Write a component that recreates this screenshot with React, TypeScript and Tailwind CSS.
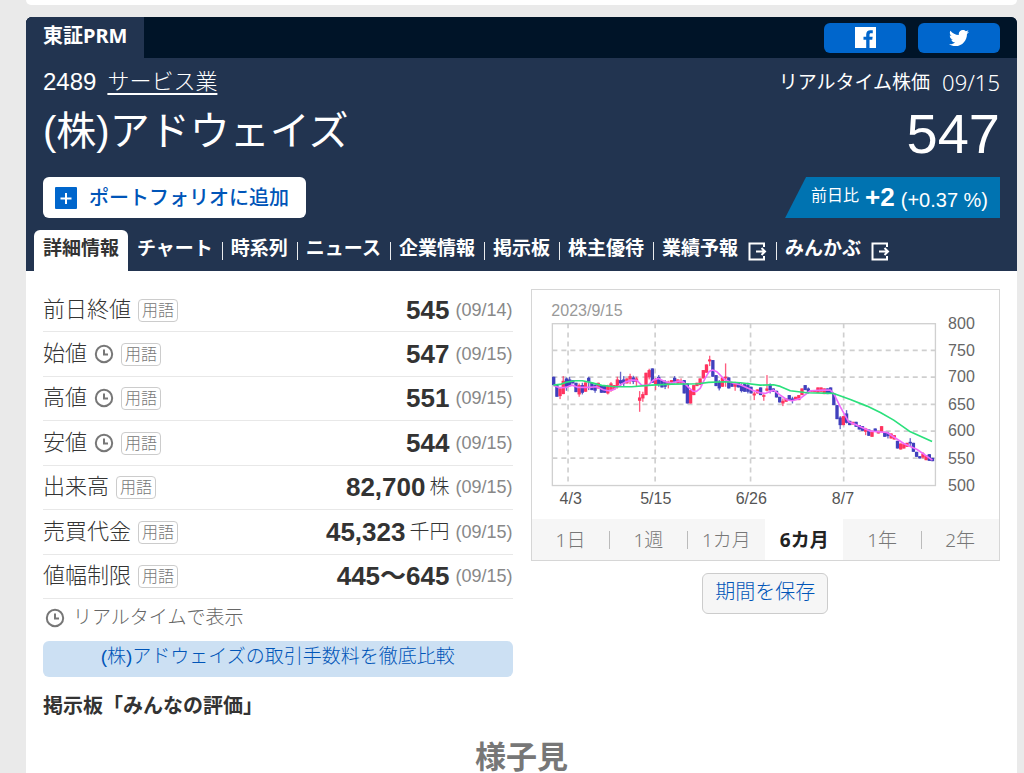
import { Fragment } from "react";
import { FaTwitter } from "react-icons/fa";

type Candle = [up: 0 | 1, top: number, bottom: number, high?: number, low?: number];

// body top / bottom, then wick ends, in chart units
const candles: Candle[] = [
  [0,290,315], [0,312,350], [1,325,348,320,357], [1,302,342,288,342], [0,295,320,292,332],
  [0,298,318,290,318], [0,300,310], [0,308,336], [1,315,343,310,350], [0,315,338,308,343],
  [1,307,335], [0,293,305,290,330], [0,308,330], [0,315,332,312,338], [1,308,325],
  [0,315,338], [0,318,338], [1,318,340,314,343], [1,310,332,306,335], [1,315,328],
  [1,298,318,290,325], [0,300,310,275,320], [0,298,310,288,320], [1,295,310], [1,288,298,281,312],
  [0,292,305,287,312], [1,295,305,290,318], [1,352,362,333,395], [1,342,355,335,365], [1,278,345],
  [1,270,292,266,298], [0,265,308], [1,298,312,294,330], [0,290,315,285,320], [0,300,322],
  [0,305,320,300,327], [1,305,315,302,325], [1,300,310], [0,293,305,288,310], [1,298,310],
  [1,303,310,295,312], [0,300,340], [0,310,370], [1,330,370], [1,315,345],
  [1,308,318], [1,295,315], [1,270,295], [1,253,278], [1,238,244,227,258],
  [0,240,290], [0,285,318], [0,305,325,300,331], [1,292,320], [1,290,295,250,320],
  [0,292,325], [0,308,320], [1,308,320,305,332], [0,308,322], [0,315,333,310,337],
  [0,312,335], [0,315,335,308,340], [0,320,340], [1,340,346,335,360], [1,328,340],
  [0,322,345], [1,345,350,342,362], [1,325,332,285,334], [0,312,330,310,340], [0,325,335],
  [0,332,352], [0,350,367], [1,362,370,355,378], [1,355,365], [0,345,360],
  [0,355,362,350,370], [1,350,360], [1,345,360], [1,325,345], [0,315,330],
  [0,325,335,322,340], [1,330,335], [1,330,336], [1,322,338], [1,322,335],
  [1,325,342], [0,325,342], [0,322,340], [0,340,375], [0,375,417],
  [0,412,435,408,447], [1,408,435], [0,400,428,390,430], [0,422,435], [1,425,433],
  [0,425,440], [0,435,448], [0,438,452], [1,445,455,443,465], [0,448,467],
  [1,452,470], [0,445,455], [1,452,460], [1,438,455], [0,455,470],
  [0,458,468,455,475], [1,460,475], [1,465,478], [0,482,505], [1,490,508],
  [1,492,505], [1,488,500], [0,485,490,474,498], [0,488,515], [0,515,530],
  [0,528,535], [1,520,532,516,535], [1,525,540], [0,522,542], [0,533,543],
];

const shortAverage =
  "85,316 104,323 122,322 141,315 160,322 190,322 215,320 235,329 250,332 265,329 280,318 300,306 320,300 335,301 350,316 368,316 385,300 400,295 420,305 440,309 460,303 475,306 490,322 503,333 514,334 525,325 540,294 552,274 562,270 575,275 600,300 625,309 645,314 680,330 705,338 720,340 745,330 765,345 785,359 800,362 825,355 855,332 895,330 915,330 925,340 945,380 970,425 995,435 1035,453 1085,457 1135,490 1175,508 1221,540";
const longAverage =
  "85,315 105,313 125,306 150,302 172,302 195,307 230,316 270,320 320,320 380,315 440,312 520,311 550,307 600,305 645,308 705,315 745,314 765,319 795,332 845,338 925,340 975,358 1025,378 1065,397 1105,420 1155,455 1220,484";

const prices = [
  { label: "800", y: 130 }, { label: "750", y: 211 }, { label: "700", y: 291 }, { label: "650", y: 373 },
  { label: "600", y: 453 }, { label: "550", y: 534 }, { label: "500", y: 616 },
];
const dates = [
  { label: "4/3", x: 129, tx: 137 }, { label: "5/15", x: 390, tx: 392 },
  { label: "6/26", x: 676, tx: 678 }, { label: "8/7", x: 955, tx: 953 },
];

const rows = [
  { label: "前日終値", clock: false, value: "545", unit: "", date: "(09/14)" },
  { label: "始値", clock: true, value: "547", unit: "", date: "(09/15)" },
  { label: "高値", clock: true, value: "551", unit: "", date: "(09/15)" },
  { label: "安値", clock: true, value: "544", unit: "", date: "(09/15)" },
  { label: "出来高", clock: false, value: "82,700", unit: "株", date: "(09/15)" },
  { label: "売買代金", clock: false, value: "45,323", unit: "千円", date: "(09/15)" },
  { label: "値幅制限", clock: false, value: "445〜645", unit: "", date: "(09/15)" },
];

const nav = [
  { label: "チャート" }, { label: "時系列" }, { label: "ニュース" }, { label: "企業情報" },
  { label: "掲示板" }, { label: "株主優待" }, { label: "業績予報", external: true }, { label: "みんかぶ", external: true },
];

const ranges = ["1日", "1週", "1カ月", "6カ月", "1年", "2年"];

function ClockIcon() {
  return (
    <svg viewBox="0 0 20 20" className="size-5 shrink-0" fill="none" stroke="#777" strokeWidth="2">
      <circle cx="10" cy="10" r="8.2" />
      <path d="M10 5.5v5h4" />
    </svg>
  );
}

function ExternalIcon() {
  return (
    <svg viewBox="0 0 19 19" className="mt-1 ml-2.5 size-[19px]" fill="none" stroke="currentColor" strokeWidth="2">
      <path d="M16 5V1.5H1.5v16H16V14M8 9.500h9M13.5 6 17 9.500 13.500 13" />
    </svg>
  );
}

function FacebookIcon() {
  return (
    <svg viewBox="0 0 24 24" className="size-[21px]" fill="currentColor">
      <path d="M0 0h24v24h-7.400v-9.300h3.100l.5-3.600h-3.600V8.800c0-1 .3-1.800 1.800-1.800h1.900V3.800c-.3 0-1.500-.1-2.800-.1-2.800 0-4.700 1.700-4.700 4.800v2.600H9.700v3.600h3.100V24H0z" />
    </svg>
  );
}

function Chart() {
  return (
    <svg viewBox="21 30 1401 687" className="block h-auto w-full font-['Liberation_Sans',sans-serif]">
      <text x="79" y="108" fontSize="48" fill="#999">2023/9/15</text>
      <g stroke="#cfcfcf" strokeWidth="5" strokeDasharray="15 12">
        {prices.slice(1, -1).map((p) => <line key={p.label} x1="82" x2="1229" y1={p.y} y2={p.y} />)}
        {dates.map((d) => <line key={d.label} x1={d.x} x2={d.x} y1="130" y2="616" />)}
      </g>
      <rect x="82" y="131" width="1148" height="485" fill="none" stroke="#d0d0d0" strokeWidth="4" />
      {candles.map(([up, top, bottom, high = top, low = bottom], i) => {
        const x = 86 + i * 9.54;
        return (
          <g key={i} fill={up ? "#ff335f" : "#4040bd"}>
            <rect x={x - 2} y={high} width="4" height={low - high} opacity="0.8" />
            <rect x={x - 5} y={top} width="10" height={bottom - top} />
          </g>
        );
      })}
      <polyline points={shortAverage} fill="none" stroke="#f06bfa" strokeWidth="5" strokeLinejoin="round" />
      <polyline points={longAverage} fill="none" stroke="#2be07c" strokeWidth="5" strokeLinejoin="round" />
      <g fontSize="48" fill="#666">
        {prices.map((p) => <text key={p.label} x="1268" y={p.y + 16}>{p.label}</text>)}
        {dates.map((d) => <text key={d.label} x={d.tx} y="672" textAnchor="middle" fill="#555">{d.label}</text>)}
      </g>
    </svg>
  );
}

export default function App() {
  return (
    <div className="flex min-h-screen flex-col bg-[#eaeaea] pr-[7px] pl-[26px] font-['Liberation_Sans','Noto_Sans_CJK_JP',sans-serif] text-[#333]">
      <div className="h-[5px] rounded-b-md bg-white" />

      <main className="mt-3 flex-1 overflow-hidden rounded-t-md bg-white">
        {/* Header */}
        <header className="bg-[#223450] text-white">
          <div className="flex h-[41px] justify-between bg-[#001428] pr-[17px]">
            <div className="bg-[#223450] px-[17px] font-['Noto_Sans','Noto_Sans_CJK_JP',sans-serif] text-xl leading-[38px] font-bold">東証PRM</div>
            <div className="flex items-center gap-3">
              <button aria-label="Facebook" className="flex h-[30px] w-[82px] items-center justify-center rounded-md bg-[#0066cc]"><FacebookIcon /></button>
              <button aria-label="Twitter" className="flex h-[30px] w-[82px] items-center justify-center rounded-md bg-[#0066cc]"><FaTwitter className="size-5" /></button>
            </div>
          </div>

          <div className="flex justify-between px-[17px] pt-3">
            <div>
              <div className="flex h-6 items-center gap-[11px] text-[22px]">
                <span className="text-2xl">2489</span>
                <a href="#" className="leading-6 font-light underline underline-offset-4">サービス業</a>
              </div>
              <h1 className="mt-[11px] text-[40px] leading-[52px]">(株)アドウェイズ</h1>
              <button className="mt-5 flex h-[41px] w-[263px] items-center gap-3 rounded-md bg-white px-3 text-xl font-medium whitespace-nowrap text-[#0055b8]">
                <svg viewBox="0 0 22 22" className="size-[22px]"><rect width="22" height="22" rx="1" fill="#0066cc" /><path d="M11 6v11M5.500 11.500h11" stroke="#fff" strokeWidth="2" /></svg>
                ポートフォリオに追加
              </button>
            </div>
            <div className="flex flex-col items-end">
              <div className="flex h-6 items-center gap-3 font-['Noto_Sans','Noto_Sans_CJK_JP',sans-serif] text-[19px]">
                <span>リアルタイム株価</span><span className="text-[22px] font-light">09/15</span>
              </div>
              <div className="mt-3 text-[56px] leading-[56px]">547</div>
              <div className="mt-[15px] flex h-[41px] items-center gap-1.5 bg-[#0073b1] pr-3 pl-[26px] [clip-path:polygon(21px_0,100%_0,100%_100%,0_100%)]">
                <span className="pb-1 text-base">前日比</span>
                <strong className="text-[26px]">+2</strong>
                <span className="pt-1 text-xl">(+0.37 %)</span>
              </div>
            </div>
          </div>

          <nav className="mt-3 flex h-[41px] pl-2 text-[19px] leading-[38px] font-bold whitespace-nowrap">
            <a href="#" aria-current="page" className="mr-[9px] rounded-t-md bg-white px-[9px] text-[#333]">詳細情報</a>
            {nav.map((item, i) => (
              <Fragment key={item.label}>
                {i > 0 && <span className="mr-2 ml-[9px] mt-3 h-[18px] w-px bg-white/90" />}
                <a href="#" className="flex h-[38px] items-center">{item.label}{item.external && <ExternalIcon />}</a>
              </Fragment>
            ))}
          </nav>
        </header>

        <div className="grid grid-cols-2 gap-[18px] px-[17px]">
          {/* Quote details */}
          <section className="pt-[17px]">
            <table className="h-[311px] w-full border-collapse">
              <tbody>
                {rows.map((r) => (
                  <tr key={r.label} className="border-b border-[#e8e8e8]">
                    <th scope="row" className="p-0 text-left font-light">
                      <div className="flex items-center gap-[7px]">
                        <span className="text-[22px] leading-8">{r.label}</span>
                        {r.clock && <ClockIcon />}
                        <a href="#" className="mt-px rounded-sm border border-[#ccc] px-[3px] text-base leading-[21px] text-[#777]">用語</a>
                      </div>
                    </th>
                    <td className="p-0">
                      <div className="flex items-center justify-end">
                        <span className="text-[26px] leading-8 font-bold">{r.value}</span>
                        {r.unit && <span className="ml-1 text-xl leading-8 font-light">{r.unit}</span>}
                        <span className="ml-1.5 text-lg leading-8 text-[#888]">{r.date}</span>
                      </div>
                    </td>
                  </tr>
                ))}
              </tbody>
            </table>
            <p className="flex h-[42px] items-center gap-2 pb-1 pl-0.5 text-[19px] font-light text-[#666]">
              <ClockIcon />リアルタイムで表示
            </p>
            <a href="#" className="block h-9 rounded-md bg-[#cce0f3] text-center text-[19px] leading-8 font-light text-[#0055b8]">
              (株)アドウェイズの取引手数料を徹底比較
            </a>
          </section>

          {/* Price chart */}
          <section className="pt-[18px]">
            <div className="border border-[#d6d6d6]">
              <Chart />
              <div className="flex h-[41px] bg-[#f6f6f6] font-['Noto_Sans','Noto_Sans_CJK_JP',sans-serif] text-[19px] leading-[38px] font-light text-[#777]">
                {ranges.map((r, i) => (
                  <Fragment key={r}>
                    {(i === 1 || i === 2 || i === 5) && <span className="mt-3 -mr-px h-[18px] w-px bg-[#bbb]" />}
                    <button className={r === "6カ月" ? "flex-1 bg-white font-bold text-[#222]" : "flex-1"}>{r}</button>
                  </Fragment>
                ))}
              </div>
            </div>
            <div className="mt-3 flex justify-center">
              <button className="h-[41px] w-[126px] rounded-md border border-[#ccc] bg-[#f6f6f6] pb-1 text-xl font-light text-[#0055b8]">期間を保存</button>
            </div>
          </section>
        </div>

        {/* Board sentiment */}
        <section className="px-[17px] pt-[13px]">
          <h2 className="text-xl leading-8 font-bold">掲示板「みんなの評価」</h2>
          <p className="mt-5 text-center text-[31px] leading-8 font-bold text-[#777]">様子見</p>
        </section>
      </main>
    </div>
  );
}
